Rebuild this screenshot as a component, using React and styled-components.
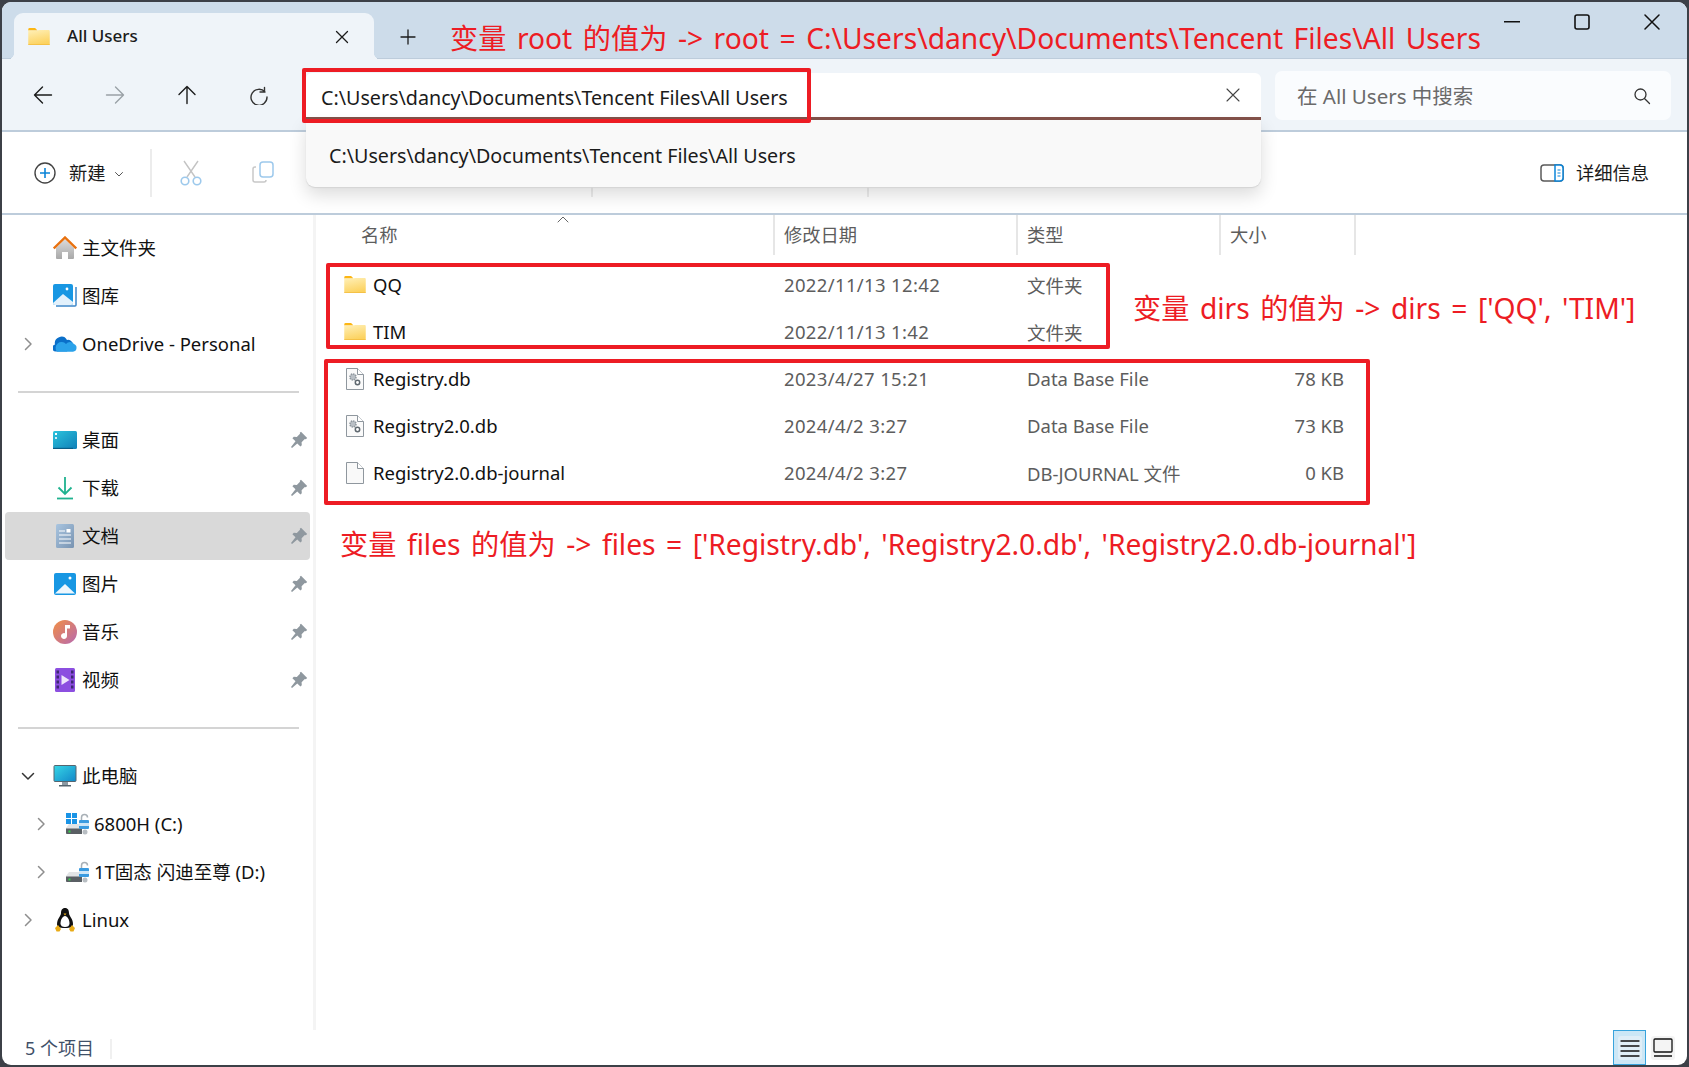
import React from "react";
import styled, { createGlobalStyle } from "styled-components";

const Global = createGlobalStyle`
  html, body { margin: 0; padding: 0; background: #3c4047; }
  body { width: 1689px; height: 1067px; overflow: hidden; font-family: "Noto Sans", "Noto Sans CJK SC", sans-serif; color: #1b1b1b; }
`;

const Page = styled.div`
  position: relative;
  width: 1689px;
  height: 1067px;
  padding: 2px 2px 2px 2px;
  box-sizing: border-box;
`;
const Win = styled.div`
  width: 1685px;
  height: 1063px;
  background: #fff;
  border-radius: 9px;
  overflow: hidden;
  display: flex;
  flex-direction: column;
`;
const TitleBar = styled.div`
  height: 57px;
  flex: none;
  background: #cddcea;
  border-bottom: 1px solid #bdccdb;
  box-sizing: border-box;
  display: flex;
  align-items: flex-start;
  padding-left: 12px;
`;
const Tab = styled.div`
  position: relative;
  z-index: 1;
  width: 360px;
  height: 47px;
  margin-top: 11px;
  background: #eff4f9;
  border-radius: 9px 9px 0 0;
  display: flex;
  align-items: center;
  padding: 0 25px 0 14px;
  box-sizing: border-box;
  &::before, &::after {
    content: "";
    position: absolute;
    bottom: 0;
    width: 8px;
    height: 8px;
  }
  &::before { left: -8px; background: radial-gradient(circle at 0 0, transparent 8px, #eff4f9 8.5px); }
  &::after { right: -8px; background: radial-gradient(circle at 100% 0, transparent 8px, #eff4f9 8.5px); }
`;
const TabTitle = styled.span`
  margin: 0 0 2px 17px;
  font-size: 17px;
  font-weight: 500;
  flex: 1;
`;
const NewTab = styled.div`
  margin: 11px 0 0 8px;
  width: 52px;
  height: 47px;
  display: flex;
  align-items: center;
  justify-content: center;
`;
const WinControls = styled.div`
  margin-left: auto;
  display: flex;
`;
const WinButton = styled.div`
  width: 70px;
  height: 40px;
  display: flex;
  align-items: center;
  justify-content: center;
`;
const NavBar = styled.div`
  position: relative;
  height: 73px;
  flex: none;
  box-sizing: border-box;
  background: #eff4f9;
  border-bottom: 2px solid #bdccdb;
  display: flex;
  align-items: flex-start;
  padding-left: 5px;
`;
const NavButton = styled.div`
  width: 72px;
  height: 71px;
  display: flex;
  align-items: center;
  justify-content: center;
`;
const AddressWrap = styled.div`
  position: relative;
  margin: 14px 0 0 11px;
  width: 955px;
  height: 47px;
`;
const Address = styled.div`
  height: 47px;
  box-sizing: border-box;
  background: #fff;
  border-bottom: 3px solid #84524a;
  border-radius: 6px 6px 0 0;
  display: flex;
  align-items: center;
  padding: 0 21px 0 15px;
  font-size: 19.7px;
  justify-content: space-between;
`;
const AddressText = styled.span`
  margin-top: 4px;
`;
const Suggest = styled.div`
  position: absolute;
  z-index: 3;
  left: 0;
  right: 0;
  top: 47px;
  height: 67px;
  box-sizing: border-box;
  padding: 3px 0 0 23px;
  background: #f9f9f9;
  border-radius: 0 0 9px 9px;
  box-shadow: 0 1px 1px #d4d4d4, 0 8px 18px rgba(0,0,0,.14);
  display: flex;
  align-items: center;
  font-size: 19.7px;
`;
const Search = styled.div`
  margin: 12px 0 0 14px;
  width: 396px;
  height: 49px;
  box-sizing: border-box;
  background: #fafcfe;
  border-radius: 7px;
  display: flex;
  align-items: center;
  justify-content: space-between;
  padding: 0 20px 0 22px;
  font-size: 20.5px;
  color: #6a6a6a;
`;
const SearchText = styled.span`
  margin-bottom: 2px;
`;
const CommandBar = styled.div`
  height: 83px;
  flex: none;
  box-sizing: border-box;
  background: #fff;
  border-bottom: 2px solid #bdccdb;
  display: flex;
  align-items: center;
  padding: 0 38px 0 32px;
`;
const CmdLabel = styled.span`
  font-size: 18.3px;
  margin-left: ${p => p.$gap || 0}px;
  padding-bottom: 2px;
`;
const CmdDivider = styled.div`
  width: 2px;
  height: 48px;
  background: #ececec;
  margin-left: ${p => p.$left}px;
  margin-right: ${p => p.$right || 0}px;
`;
const CmdIcon = styled.div`
  width: 72px;
  display: flex;
  justify-content: center;
`;
const Details = styled.div`
  margin-left: auto;
  display: flex;
  align-items: center;
  gap: 12px;
`;
const Body = styled.div`
  flex: 1;
  display: flex;
  min-height: 0;
`;
const Sidebar = styled.div`
  width: 314px;
  flex: none;
  padding: 9px 0 0 3px;
  box-sizing: border-box;
  border-right: 3px solid #f4f4f4;
  height: 815px;
`;
const NavRow = styled.div`
  height: 48px;
  width: 305px;
  box-sizing: border-box;
  display: grid;
  grid-template-columns: ${p => p.$nested ? "57px 31px 1fr 22px" : "44px 31px 1fr 22px"};
  align-items: center;
  border-radius: 4px;
  background: ${p => p.$selected ? "#d9d9d9" : "transparent"};
  font-size: 18.5px;
  color: #111;
`;
const Slot = styled.div`
  display: flex;
  align-items: center;
  justify-content: ${p => p.$justify || "center"};
  padding-left: ${p => p.$pad || 0}px;
`;
const RowLabel = styled.span`
  white-space: nowrap;
  margin-bottom: 2px;
  padding-left: ${p => p.$nested ? 1 : 2}px;
`;
const SideDivider = styled.div`
  height: 2px;
  width: 281px;
  margin: 23px 0 23px 13px;
  background: #d4d4d4;
`;
const Content = styled.div`
  flex: 1;
  min-width: 0;
`;
const HeaderRow = styled.div`
  position: relative;
  display: grid;
  grid-template-columns: 459px 243px 203px 135px;
  height: 40px;
`;
const HeadCell = styled.div`
  padding: 0 0 2px ${p => p.$pad || 9}px;
  border-right: 2px solid #e6e6e6;
  font-size: 18.3px;
  color: #5d5d5d;
  display: flex;
  align-items: center;
`;
const SortCaret = styled.div`
  position: absolute;
  left: 241px;
  top: 0;
  line-height: 0;
`;
const FileList = styled.div`
  padding-top: 6px;
`;
const FileRow = styled.div`
  display: grid;
  grid-template-columns: 459px 243px 203px 123px;
  height: 47px;
  align-items: center;
  font-size: 18.5px;
`;
const NameCell = styled.div`
  display: flex;
  align-items: center;
  padding-left: 28px;
  color: #111;
`;
const IconBox = styled.div`
  width: 29px;
  box-sizing: border-box;
  display: flex;
  padding-left: ${p => p.$inset ? 2 : 0}px;
`;
const MetaCell = styled.div`
  padding-left: ${p => p.$pad || 9}px;
  color: #5d5d5d;
  text-align: ${p => p.$right ? "right" : "left"};
  letter-spacing: ${p => p.$spaced ? "0.35px" : "0"};
`;
const StatusBar = styled.div`
  height: 33px;
  flex: none;
  display: flex;
  align-items: center;
  padding-left: 23px;
  font-size: 18px;
  color: #3f5068;
`;
const StatusText = styled.span`
  margin-bottom: 3px;
`;
const StatusSep = styled.div`
  width: 2px;
  height: 20px;
  background: #f0f0f0;
  margin-left: 16px;
`;
const ViewButtons = styled.div`
  margin-left: auto;
  margin-right: 12px;
  display: flex;
  align-items: flex-end;
  gap: 5px;
  height: 100%;
`;
const ViewActive = styled.div`
  width: 33px;
  height: 35px;
  box-sizing: border-box;
  border: 1px solid #38a3dc;
  background: #cce7f6;
  display: flex;
  align-items: center;
  justify-content: center;
`;
const ViewInner = styled.div`
  width: 24px;
  height: 24px;
  border-radius: 3px;
  background: ${p => p.$plain ? "#f4f4f4" : "#e0eef7"};
  display: flex;
  align-items: center;
  justify-content: center;
  margin-bottom: ${p => p.$plain ? 5 : 0}px;
`;
const RedBox = styled.div`
  position: absolute;
  z-index: 4;
  box-sizing: border-box;
  border: 4px solid #ed1c24;
  border-radius: 2px;
  pointer-events: none;
  left: ${p => p.$x}px;
  top: ${p => p.$y}px;
  width: ${p => p.$w}px;
  height: ${p => p.$h}px;
`;
const Note = styled.div`
  position: absolute;
  z-index: 5;
  left: ${p => p.$x}px;
  top: ${p => p.$y}px;
  height: 40px;
  line-height: 40px;
  color: #ed1c24;
  font-size: 28.2px;
  word-spacing: 3.2px;
  white-space: pre;
`;

const Line = ({ d, c = "#1b1b1b", w = 1.4, s = 24, vb = 24 }) => (
  <svg width={s} height={s} viewBox={`0 0 ${vb} ${vb}`} fill="none" stroke={c} strokeWidth={w} strokeLinecap="round" strokeLinejoin="round"><path d={d} /></svg>
);

const Folder = ({ w = 22 }) => (
  <svg width={w} height={w * 0.8} viewBox="0 0 22 18">
    <defs><linearGradient id="fg" x1="0" y1="0" x2="0.3" y2="1"><stop offset="0" stopColor="#fff0b8" /><stop offset="1" stopColor="#fcd25f" /></linearGradient></defs>
    <path d="M0 1.5A1.5 1.5 0 0 1 1.5 0H7l2.5 2.5H0z" fill="#fcb614" />
    <path d="M0 2.5h9.5L11 2h10a1 1 0 0 1 1 1v14a1 1 0 0 1-1 1H1a1 1 0 0 1-1-1z" fill="url(#fg)" />
    <path d="M0 16.8h22V17a1 1 0 0 1-1 1H1a1 1 0 0 1-1-1z" fill="#eeb02c" />
  </svg>
);
const Pin = () => (
  <svg width="18" height="18" viewBox="0 0 18 18" fill="#8f989f"><path d="M11 0.8l6.2 6.2-1.4 1.2-1-.2-3.2 3.2.2 3-1.4 1.4-3.1-3.1L2 17l-1-1 4.5-5.7-3.1-3.1 1.4-1.4 3 .2 3.2-3.2-.2-1z" /></svg>
);
const Chevron = ({ open }) => open
  ? <Line s={16} vb={16} c="#333" w={1.5} d="M2.5 5.5L8 11l5.5-5.5" />
  : <Line s={16} vb={16} c="#8e8e8e" w={1.5} d="M5.5 2.5L11 8l-5.5 5.5" />;

const HomeIcon = () => (
  <svg width="24" height="24" viewBox="0 0 24 24">
    <defs><linearGradient id="hm" x1="0" y1="0" x2="0" y2="1"><stop offset="0" stopColor="#dcdcdc" /><stop offset="1" stopColor="#a8a8a8" /></linearGradient></defs>
    <path d="M3 12l9-9 9 9v10a1 1 0 0 1-1 1h-5v-7H9v7H4a1 1 0 0 1-1-1z" fill="url(#hm)" />
    <path d="M.8 12.5L12 1.5l11.2 11" fill="none" stroke="#e8710f" strokeWidth="2.4" />
  </svg>
);
const GalleryIcon = () => (
  <svg width="24" height="24" viewBox="0 0 24 24">
    <path d="M3 22h19a1 1 0 0 0 1-1V3" fill="none" stroke="#3d87c9" strokeWidth="1.5" />
    <rect x="0" y="0" width="20" height="21" rx="2" fill="#1897e3" />
    <path d="M0 19L10 10l10 8v1a2 2 0 0 1-2 2H2a2 2 0 0 1-2-2z" fill="#e2f1fc" />
    <circle cx="14" cy="5" r="1.4" fill="#fff" />
  </svg>
);
const CloudIcon = () => (
  <svg width="24" height="16" viewBox="0 0 24 16">
    <path d="M3 15.5A3.5 3.5 0 0 1 2 8.6 6.5 6.5 0 0 1 14 4a5 5 0 0 1 6 4H20l-6 7.5z" fill="#0a6fc9" />
    <path d="M4 15.8h16a4 4 0 0 0 1-7.7 5 5 0 0 0-8 0 4 4 0 0 0-9 7.7z" fill="#2ba2ea" />
  </svg>
);
const DesktopIcon = () => (
  <svg width="24" height="18" viewBox="0 0 24 18">
    <defs><linearGradient id="dk" x1="0" y1="0" x2="1" y2="1"><stop offset="0" stopColor="#2cc3dc" /><stop offset="1" stopColor="#0f7fb8" /></linearGradient></defs>
    <rect width="24" height="18" rx="1.5" fill="url(#dk)" />
    <rect x="2" y="2" width="2" height="2" fill="#fff" /><rect x="2" y="6" width="2" height="2" fill="#cfeff7" />
    <rect y="16.8" width="20" height="1.2" fill="#0a5d86" />
  </svg>
);
const DownloadIcon = () => (
  <svg width="24" height="24" viewBox="0 0 24 24" fill="none" stroke="#1fb28f" strokeWidth="1.8"><path d="M12 1v17M5.5 11.5L12 18l6.500-6.500" /><path d="M4 22.500h16" /></svg>
);
const DocIcon = () => (
  <svg width="24" height="24" viewBox="0 0 24 24">
    <defs><linearGradient id="dc" x1="0" y1="0" x2="1" y2="1"><stop offset="0" stopColor="#a9c5e0" /><stop offset="1" stopColor="#7893b1" /></linearGradient></defs>
    <rect x="3" y="0" width="18" height="24" rx="1.5" fill="url(#dc)" />
    <path d="M6 7h6M6 11h12M6 15h12M6 19h12" stroke="#fff" strokeWidth="1.2" /><rect x="13.500" y="5" width="4" height="3.500" fill="#fff" />
  </svg>
);
const PictureIcon = () => (
  <svg width="22" height="22" viewBox="0 0 22 22">
    <rect width="22" height="22" rx="2" fill="#1897e3" />
    <path d="M1 20.500L11 11l10 9.500z" fill="#eef7fd" /><circle cx="16" cy="5" r="1.500" fill="#fff" />
  </svg>
);
const MusicIcon = () => (
  <svg width="24" height="24" viewBox="0 0 24 24">
    <defs><linearGradient id="ms" x1="0" y1="0" x2="1" y2="1"><stop offset="0" stopColor="#f28f44" /><stop offset="1" stopColor="#b769b0" /></linearGradient></defs>
    <circle cx="12" cy="12" r="12" fill="url(#ms)" />
    <path d="M12 5h5v3.500h-3V16a3 3 0 1 1-2-2.800z" fill="#fff" />
  </svg>
);
const VideoIcon = () => (
  <svg width="20" height="24" viewBox="0 0 20 24">
    <rect width="20" height="24" rx="1.500" fill="#8c4fe0" />
    {[2, 7, 12, 17].map(y => <React.Fragment key={y}><rect x="1.500" y={y + 0.5} width="2.500" height="3" fill="#3e2a72" /><rect x="16" y={y + 0.5} width="2.500" height="3" fill="#3e2a72" /></React.Fragment>)}
    <path d="M6.500 7l8 5-8 5z" fill="#eee5fb" />
  </svg>
);
const MonitorIcon = () => (
  <svg width="24" height="23" viewBox="0 0 24 23">
    <defs><linearGradient id="mn" x1="0" y1="0" x2="1" y2="1"><stop offset="0" stopColor="#36d6e6" /><stop offset="1" stopColor="#1287c8" /></linearGradient></defs>
    <rect width="22" height="16" x="1" y="0.500" rx="1" fill="url(#mn)" stroke="#56656f" />
    <path d="M9 17h6v3H9z" fill="#8d9aa3" /><path d="M6 20h12v1.500H6z" fill="#56656f" />
  </svg>
);
const DriveIcon = ({ win }) => (
  <svg width="24" height="22" viewBox="0 0 24 22">
    {win && <g fill="#1a94e6"><rect x="0" y="0" width="5" height="5" /><rect x="6" y="0" width="5" height="5" /><rect x="0" y="6" width="5" height="5" /><rect x="6" y="6" width="5" height="5" /></g>}
    <path d="M3 11h13v10H0v-6z" fill="#e2e4e6" /><path d="M0 15.500h16V21H1a1 1 0 0 1-1-1z" fill="#5a5f64" />
    <rect x="2.500" y="17.500" width="2" height="2" fill="#34d24a" />
    <path d="M15.500 7V4.500a3 3 0 0 1 6 0" fill="none" stroke="#a8b0b6" strokeWidth="1.500" />
    <rect x="13" y="7" width="10" height="9" rx="1" fill="#3b9be0" /><rect x="13" y="10" width="10" height="3" fill="#cfe6f7" />
    <circle cx="19" cy="19" r="2.500" fill="#b8bec3" />
  </svg>
);
const TuxIcon = () => (
  <svg width="22" height="24" viewBox="0 0 22 24">
    <path d="M11 0c3 0 4 2.500 4 5 0 3 4 6 4 11 0 3-2 4-8 4s-8-1-8-4c0-5 4-8 4-11 0-2.500 1-5 4-5z" fill="#111" />
    <path d="M11 8c2.500 0 4.500 4 4.500 7.500 0 2.500-2 3.500-4.500 3.500s-4.500-1-4.500-3.500C6.500 12 8.500 8 11 8z" fill="#fff" />
    <path d="M9.500 5.500h3L11 7.500z" fill="#e9ab17" />
    <path d="M1 20l3-3 3 4-1.500 2.500H2.500zM21 20l-3-3-3 4 1.500 2.500h3z" fill="#e9ab17" />
  </svg>
);
const DbFile = () => (
  <svg width="18" height="22" viewBox="0 0 18 22">
    <path d="M.5.500h11l6 6v15H.500z" fill="#fafafa" stroke="#8f979e" /><path d="M11.500.500v6h6" fill="#fff" stroke="#8f979e" />
    <circle cx="7" cy="9" r="3" fill="#b9bfc5" stroke="#8f979e" strokeDasharray="1.500 .8" strokeWidth="1.500" />
    <circle cx="11.500" cy="14.500" r="2.200" fill="#fff" stroke="#5f686f" strokeWidth="1.500" />
  </svg>
);
const BlankFile = () => (
  <svg width="18" height="22" viewBox="0 0 18 22">
    <path d="M.5.500h11l6 6v15H.500z" fill="#f9f9f9" stroke="#8f979e" /><path d="M11.500.500v6h6" fill="#fff" stroke="#8f979e" />
  </svg>
);

const places = [
  { icon: <DesktopIcon />, label: "桌面" },
  { icon: <DownloadIcon />, label: "下载" },
  { icon: <DocIcon />, label: "文档", selected: true },
  { icon: <PictureIcon />, label: "图片" },
  { icon: <MusicIcon />, label: "音乐" },
  { icon: <VideoIcon />, label: "视频" },
];
const files = [
  { icon: <IconBox><Folder /></IconBox>, name: "QQ", date: "2022/11/13 12:42", type: "文件夹", size: "" },
  { icon: <IconBox><Folder /></IconBox>, name: "TIM", date: "2022/11/13 1:42", type: "文件夹", size: "" },
  { icon: <IconBox $inset><DbFile /></IconBox>, name: "Registry.db", date: "2023/4/27 15:21", type: "Data Base File", size: "78 KB" },
  { icon: <IconBox $inset><DbFile /></IconBox>, name: "Registry2.0.db", date: "2024/4/2 3:27", type: "Data Base File", size: "73 KB" },
  { icon: <IconBox $inset><BlankFile /></IconBox>, name: "Registry2.0.db-journal", date: "2024/4/2 3:27", type: "DB-JOURNAL 文件", size: "0 KB" },
];

const SideItem = ({ chevron, open, icon, label, pin, selected, nested }) => (
  <NavRow $selected={selected} $nested={nested}>
    <Slot $justify="flex-start" $pad={nested ? 28 : 15}>{chevron && <Chevron open={open} />}</Slot>
    <Slot>{icon}</Slot>
    <RowLabel $nested={nested}>{label}</RowLabel>
    <Slot>{pin && <Pin />}</Slot>
  </NavRow>
);

export default function App() {
  const path = "C:\\Users\\dancy\\Documents\\Tencent Files\\All Users";
  return (
    <Page>
      <Global />
      <Win>
        <TitleBar>
          <Tab>
            <Folder />
            <TabTitle>All Users</TabTitle>
            <Line s={14} vb={14} w={1.3} d="M1.500 1.500l11 11M12.500 1.500l-11 11" />
          </Tab>
          <NewTab><Line s={16} vb={16} w={1.3} d="M8 1v14M1 8h14" /></NewTab>
          <WinControls>
            <WinButton><svg width="16" height="2"><rect width="16" height="1.500" fill="#111" /></svg></WinButton>
            <WinButton><svg width="16" height="16" fill="none" stroke="#111" strokeWidth="1.600"><rect x="1" y="1" width="14" height="14" rx="2" /></svg></WinButton>
            <WinButton><Line s={16} vb={16} w={1.500} c="#111" d="M1 1l14 14M15 1L1 15" /></WinButton>
          </WinControls>
        </TitleBar>
        <NavBar>
          <NavButton><Line s={20} vb={20} w={1.400} d="M18.500 10H1.500M9.500 2l-8 8 8 8" /></NavButton>
          <NavButton><Line s={20} vb={20} w={1.400} c="#9aa0a6" d="M1.500 10h17M10.500 2l8 8-8 8" /></NavButton>
          <NavButton><Line s={20} vb={20} w={1.400} d="M10 18.500V1.500M2 9.500l8-8 8 8" /></NavButton>
          <NavButton><Line s={20} vb={20} w={1.400} c="#333" d="M15.500 2.500v4.500H11M16 7a8 8 0 1 0 2 5" /></NavButton>
          <AddressWrap>
            <Address>
              <AddressText>{path}</AddressText>
              <Line s={14} vb={14} w={1.100} c="#444" d="M1 1l12 12M13 1L1 13" />
            </Address>
            <Suggest>{path}</Suggest>
          </AddressWrap>
          <Search>
            <SearchText>在 All Users 中搜索</SearchText>
            <Line s={18} vb={18} w={1.300} c="#333" d="M11.500 11.500l5 5M13 7.500a5.500 5.500 0 1 1-11 0 5.500 5.500 0 0 1 11 0z" />
          </Search>
        </NavBar>
        <CommandBar>
          <svg width="22" height="22" viewBox="0 0 22 22" fill="none"><circle cx="11" cy="11" r="10" stroke="#444" strokeWidth="1.400" /><path d="M11 6v10M6 11h10" stroke="#0a84d8" strokeWidth="1.600" /></svg>
          <CmdLabel $gap={13}>新建</CmdLabel>
          <CmdLabel $gap={8}><Line s={10} vb={10} w={1} c="#555" d="M1.500 3.500L5 7l3.500-3.500" /></CmdLabel>
          <CmdDivider $left={26} $right={3} />
          <CmdIcon>
            <svg width="22" height="26" viewBox="0 0 22 26" fill="none"><path d="M4 1l11 16M18 1L7 17" stroke="#c4c4c4" strokeWidth="1.400" /><circle cx="5" cy="21" r="3.800" stroke="#9dc9ec" strokeWidth="1.600" /><circle cx="17" cy="21" r="3.800" stroke="#9dc9ec" strokeWidth="1.600" /></svg>
          </CmdIcon>
          <CmdIcon>
            <svg width="22" height="23" viewBox="0 0 22 23" fill="none"><path d="M4 6H3a2 2 0 0 0-2 2v11a2 2 0 0 0 2 2h9a2 2 0 0 0 2-2" stroke="#c8c8c8" strokeWidth="1.500" /><rect x="8" y="1" width="13" height="15" rx="3" stroke="#9dc9ec" strokeWidth="1.500" /></svg>
          </CmdIcon>
          <CmdDivider $left={292} />
          <CmdDivider $left={274} />
          <Details>
            <svg width="24" height="18" viewBox="0 0 24 18" fill="none"><rect x="1" y="1" width="22" height="16" rx="3" stroke="#5a5a5a" strokeWidth="1.500" /><path d="M15 1h5a3 3 0 0 1 3 3v10a3 3 0 0 1-3 3h-5z" fill="#fff" stroke="#0a84d8" strokeWidth="1.500" /><path d="M17.500 6h3M17.500 9h3M17.500 12h3" stroke="#0a84d8" strokeWidth="1.200" /></svg>
            <CmdLabel>详细信息</CmdLabel>
          </Details>
        </CommandBar>
        <Body>
          <Sidebar>
            <SideItem icon={<HomeIcon />} label="主文件夹" />
            <SideItem icon={<GalleryIcon />} label="图库" />
            <SideItem chevron icon={<CloudIcon />} label="OneDrive - Personal" />
            <SideDivider />
            {places.map(p => <SideItem key={p.label} icon={p.icon} label={p.label} selected={p.selected} pin />)}
            <SideDivider />
            <SideItem chevron open icon={<MonitorIcon />} label="此电脑" />
            <SideItem nested chevron icon={<DriveIcon win />} label="6800H (C:)" />
            <SideItem nested chevron icon={<DriveIcon />} label="1T固态 闪迪至尊 (D:)" />
            <SideItem chevron icon={<TuxIcon />} label="Linux" />
          </Sidebar>
          <Content>
            <HeaderRow>
              <HeadCell $pad={45}>名称</HeadCell>
              <HeadCell>修改日期</HeadCell>
              <HeadCell>类型</HeadCell>
              <HeadCell>大小</HeadCell>
              <SortCaret><Line s={12} vb={12} w={1} c="#666" d="M1 7l5-5 5 5" /></SortCaret>
            </HeaderRow>
            <FileList>
              {files.map(f => (
                <FileRow key={f.name}>
                  <NameCell>{f.icon}{f.name}</NameCell>
                  <MetaCell $spaced>{f.date}</MetaCell>
                  <MetaCell>{f.type}</MetaCell>
                  <MetaCell $right>{f.size}</MetaCell>
                </FileRow>
              ))}
            </FileList>
          </Content>
        </Body>
        <StatusBar>
          <StatusText>5 个项目</StatusText>
          <StatusSep />
          <ViewButtons>
            <ViewActive><ViewInner><Line s={20} vb={20} w={1.300} c="#111" d="M1 3h18M1 8h18M1 13h18M1 18h18" /></ViewInner></ViewActive>
            <ViewInner $plain><svg width="20" height="20" viewBox="0 0 20 20" fill="none" stroke="#111" strokeWidth="1.300"><rect x="1" y="1" width="18" height="13" rx="1" /><path d="M1 18h18" /></svg></ViewInner>
          </ViewButtons>
        </StatusBar>
      </Win>
      <RedBox $x={302} $y={68} $w={509} $h={55} />
      <RedBox $x={326} $y={263} $w={784} $h={86} />
      <RedBox $x={324} $y={359} $w={1046} $h={146} />
      <Note $x={450} $y={18}>变量 root 的值为 -&gt; root = {path}</Note>
      <Note $x={1133} $y={288}>变量 dirs 的值为 -&gt; dirs = ['QQ', 'TIM']</Note>
      <Note $x={340} $y={524}>变量 files 的值为 -&gt; files = ['Registry.db', 'Registry2.0.db', 'Registry2.0.db-journal']</Note>
    </Page>
  );
}
